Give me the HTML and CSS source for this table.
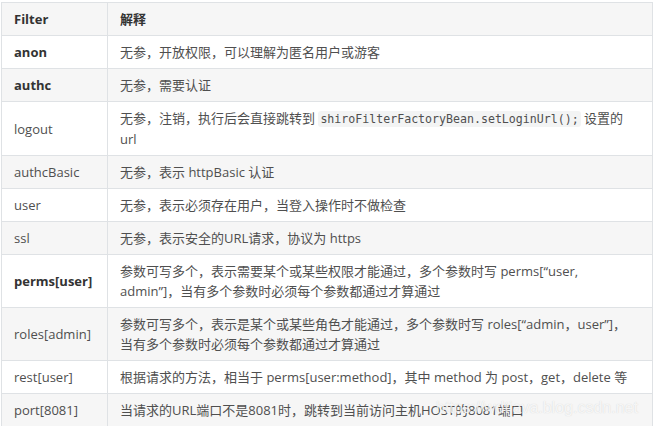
FILE: index.html
```html
<!DOCTYPE html>
<html lang="zh">
<head>
<meta charset="utf-8">
<title>Shiro Filter</title>
<link rel="stylesheet" href="styles.css">
</head>
<body>
<div class="wrap">
<table class="filters">
  <thead>
    <tr><th class="c1">Filter</th><th>解释</th></tr>
  </thead>
  <tbody>
    <tr><td class="b">anon</td><td>无参，开放权限，可以理解为匿名用户或游客</td></tr>
    <tr><td class="b">authc</td><td>无参，需要认证</td></tr>
    <tr><td>logout</td><td>无参，注销，执行后会直接跳转到 <code>shiroFilterFactoryBean.setLoginUrl();</code> 设置的 url</td></tr>
    <tr><td>authcBasic</td><td>无参，表示 httpBasic 认证</td></tr>
    <tr><td>user</td><td>无参，表示必须存在用户，当登入操作时不做检查</td></tr>
    <tr><td>ssl</td><td>无参，表示安全的URL请求，协议为 https</td></tr>
    <tr><td class="b">perms[user]</td><td>参数可写多个，表示需要某个或某些权限才能通过，多个参数时写 perms[“user, admin”]，当有多个参数时必须每个参数都通过才算通过</td></tr>
    <tr><td>roles[admin]</td><td>参数可写多个，表示是某个或某些角色才能通过，多个参数时写 roles[“admin，user”]，<br>当有多个参数时必须每个参数都通过才算通过</td></tr>
    <tr><td>rest[user]</td><td>根据请求的方法，相当于 perms[user:method]，其中 method 为 post，get，delete 等</td></tr>
    <tr><td>port[8081]</td><td>当请求的URL端口不是8081时，跳转到当前访问主机HOST的8081端口</td></tr>
  </tbody>
</table>
<div class="watermark">https://wdtjava.blog.csdn.net</div>
</div>
</body>
</html>
```

FILE: styles.css
```css
html, body {
  margin: 0;
  padding: 0;
  background: #ffffff;
}

.wrap {
  position: relative;
  padding: 2px 0 0 1px;
  width: 653px;
  height: 424px;
  overflow: hidden;
}

.filters {
  border-collapse: collapse;
  width: 652px;
  font-family: "Open Sans", "Noto Sans CJK TC", sans-serif;
  font-size: 13px;
  line-height: 20px;
  color: #4f4f4f;
}

.filters th,
.filters td {
  border: 1px solid #dfe2e5;
  padding: 6px 12px;
  text-align: left;
  vertical-align: middle;
}

.filters th {
  font-weight: 700;
  color: #333333;
  background: #f6f6f6;
}

.filters .c1 {
  width: 81px;
}

.filters tbody tr:nth-child(even) td {
  background: #f6f6f6;
}

.filters tbody tr:nth-child(odd) td {
  background: #ffffff;
}

.filters td.b {
  font-weight: 700;
  color: #333333;
}

.filters code {
  font-family: "DejaVu Sans Mono", monospace;
  font-size: 11.6px;
  color: #4f4f4f;
  background: #f3f4f4;
  border-radius: 3px;
  padding: 1px 2px;
}

.watermark {
  position: absolute;
  left: 436px;
  top: 399px;
  font-family: "Liberation Sans", Arial, sans-serif;
  font-size: 16px;
  color: rgba(255, 255, 255, 0.8);
  text-shadow: 0 0 1px rgba(150, 150, 150, 0.4);
  white-space: nowrap;
}
```
